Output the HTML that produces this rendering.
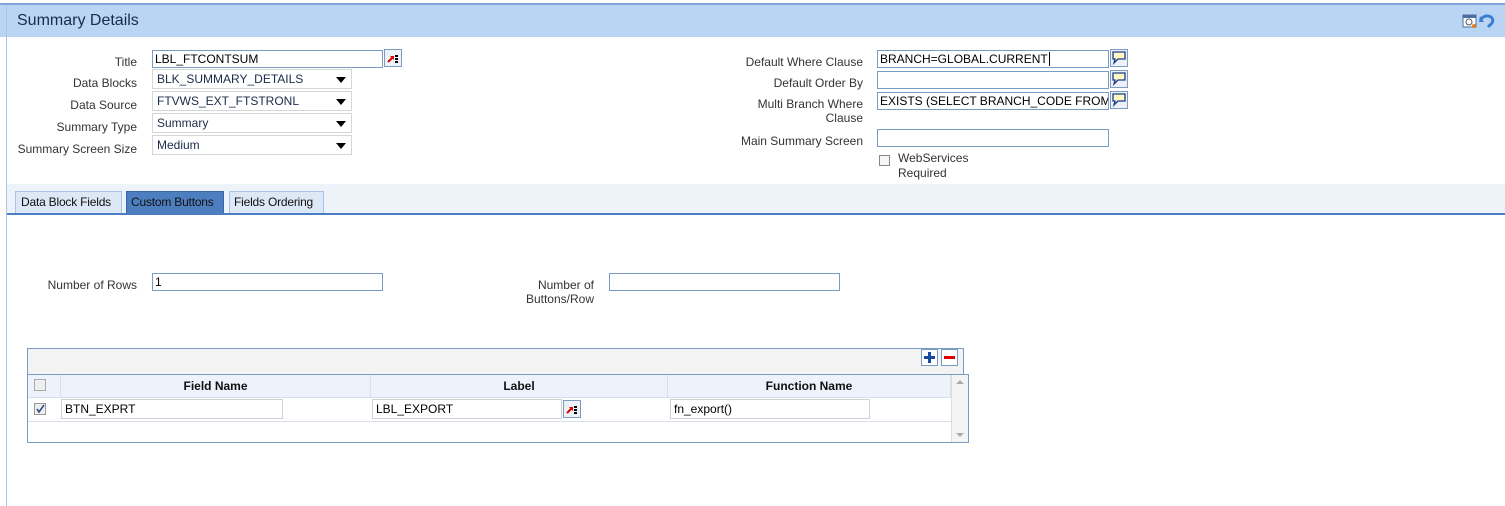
<!DOCTYPE html>
<html><head><meta charset="utf-8">
<style>
*{margin:0;padding:0;box-sizing:border-box}
body{width:1505px;height:506px;background:#fff;position:relative;overflow:hidden;font-family:"Liberation Sans",Arial,sans-serif;font-size:12px;color:#333}
.a{position:absolute}
.lbl{position:absolute;text-align:right;color:#333;font-size:12px;line-height:14px}
.inp{position:absolute;height:18px;border:1px solid #7a9cc4;background:#fff;font-size:12px;line-height:16px;padding-left:2px;color:#000;white-space:nowrap;overflow:hidden}
.sel{position:absolute;height:20px;border:1px solid #d6d6d6;background:#fff;font-size:12px;line-height:18px;padding-left:4px;color:#1a2b4a}
.sel:after{content:"";position:absolute;right:5px;top:7px;border-left:5px solid transparent;border-right:5px solid transparent;border-top:6px solid #000}
.lk{position:absolute;width:18px;height:18px;border:1px solid #7a9cc4;background:#eef2f8}
.tab{position:absolute;top:191px;height:22px;border:1px solid #a9c4e6;border-bottom:none;background:#dde8f6;font-size:12px;line-height:20px;padding:0 0 0 5px;color:#111;white-space:nowrap;overflow:hidden;letter-spacing:-0.2px}
.th{position:absolute;top:375px;height:22px;background:#eef2fa;border-right:1px solid #d6dfec;font-weight:bold;font-size:12px;line-height:22px;text-align:center;color:#111}
.ci{position:absolute;height:20px;border:1px solid #d0d0d0;background:#fff;font-size:12px;line-height:18px;padding-left:3px;color:#000}
</style></head><body>
<div class="a" style="left:0;top:3px;width:1505px;height:2px;background:#7ea6d8"></div>
<div class="a" style="left:0;top:5px;width:1505px;height:32px;background:#b9d5f3"></div>
<div class="a" style="left:6px;top:5px;width:1px;height:501px;background:#a9c4e6"></div>
<div class="a" style="left:17px;top:12px;font-size:16px;color:#1a2b4a">Summary Details</div>
<svg class="a" style="left:1462px;top:13px" width="34" height="16" viewBox="0 0 34 16">
<rect x="1" y="2" width="13" height="12" fill="#fff" stroke="#4a6fa0"/><rect x="1" y="2" width="13" height="3" fill="#4a6fa0"/><circle cx="7" cy="9" r="3" fill="none" stroke="#555"/><circle cx="12" cy="13" r="2" fill="#e08020"/>
<path d="M19 6 Q24 1 29 4 Q33 8 28 12 L26 14" fill="none" stroke="#3a7fd0" stroke-width="3"/><path d="M18 3 L22 9 L17 9Z" fill="#3a7fd0"/>
</svg>

<div class="lbl" style="left:20px;width:117px;top:55px">Title</div>
<div class="inp" style="left:152px;top:50px;width:231px">LBL_FTCONTSUM</div>
<div class="lk" style="left:384px;top:49px"><svg width="16" height="16"><path d="M3 12 L8 7" stroke="#d00" stroke-width="2"/><path d="M5 6 L9 6 L9 10Z" fill="#d00"/><rect x="10" y="5" width="3" height="2" fill="#000"/><rect x="10" y="8" width="3" height="2" fill="#000"/><rect x="10" y="11" width="3" height="2" fill="#000"/></svg></div>
<div class="lbl" style="left:20px;width:117px;top:76px">Data Blocks</div>
<div class="sel" style="left:152px;top:69px;width:200px">BLK_SUMMARY_DETAILS</div>
<div class="lbl" style="left:20px;width:117px;top:98px">Data Source</div>
<div class="sel" style="left:152px;top:91px;width:200px">FTVWS_EXT_FTSTRONL</div>
<div class="lbl" style="left:20px;width:117px;top:120px">Summary Type</div>
<div class="sel" style="left:152px;top:113px;width:200px">Summary</div>
<div class="lbl" style="left:0;width:137px;top:142px">Summary Screen Size</div>
<div class="sel" style="left:152px;top:135px;width:200px">Medium</div>

<div class="lbl" style="left:700px;width:163px;top:55px">Default Where Clause</div>
<div class="inp" style="left:877px;top:50px;width:232px">BRANCH=GLOBAL.CURRENT<span style="border-left:1px solid #000;margin-left:1px"></span></div>
<div class="lbl" style="left:700px;width:163px;top:76px">Default Order By</div>
<div class="inp" style="left:877px;top:71px;width:232px"></div>
<div class="lbl" style="left:700px;width:163px;top:97px">Multi Branch Where<br>Clause</div>
<div class="inp" style="left:877px;top:92px;width:232px">EXISTS (SELECT BRANCH_CODE FROM</div>
<div class="lk" style="left:1110px;top:49px"></div>
<div class="lk" style="left:1110px;top:70px"></div>
<div class="lk" style="left:1110px;top:91px"></div>
<svg class="a" style="left:1111px;top:50px" width="16" height="60"><g fill="#fff8c0" stroke="#1a3a8a" stroke-width="1.3"><path d="M2 2 H14 V9 H7 L3 13 L4 9 H2Z"/><path d="M2 23 H14 V30 H7 L3 34 L4 30 H2Z"/><path d="M2 44 H14 V51 H7 L3 55 L4 51 H2Z"/></g></svg>
<div class="lbl" style="left:700px;width:163px;top:134px">Main Summary Screen</div>
<div class="inp" style="left:877px;top:129px;width:232px"></div>
<div class="a" style="left:879px;top:155px;width:11px;height:11px;border:1px solid #888;background:#f6f6f6"></div>
<div class="a" style="left:898px;top:151px;line-height:15px;color:#333">WebServices<br>Required</div>

<div class="a" style="left:7px;top:184px;width:1498px;height:30px;background:#eef3fa"></div>
<div class="a" style="left:7px;top:213px;width:1498px;height:2px;background:#4a7fc0"></div>
<div class="tab" style="left:15px;width:107px">Data Block Fields</div>
<div class="tab" style="left:126px;width:98px;background:#4d7fc0;border-color:#3a66a8;color:#111;padding-left:4px">Custom Buttons</div>
<div class="tab" style="left:229px;width:95px;padding-left:4px">Fields Ordering</div>

<div class="lbl" style="left:20px;width:117px;top:278px">Number of Rows</div>
<div class="inp" style="left:152px;top:273px;width:231px">1</div>
<div class="lbl" style="left:480px;width:114px;top:278px">Number of<br>Buttons/Row</div>
<div class="inp" style="left:609px;top:273px;width:231px"></div>

<div class="a" style="left:27px;top:348px;width:937px;height:26px;background:#f3f3f3;border:1px solid #7a9cc4;border-bottom:none"></div>
<div class="a" style="left:921px;top:349px;width:17px;height:17px;border:1px solid #7a9cc4;background:#fff"><div class="a" style="left:2px;top:6px;width:11px;height:3px;background:#1a4aa0"></div><div class="a" style="left:6px;top:2px;width:3px;height:11px;background:#1a4aa0"></div></div>
<div class="a" style="left:941px;top:349px;width:17px;height:17px;border:1px solid #7a9cc4;background:#fff"><div class="a" style="left:2px;top:6px;width:11px;height:3px;background:#d00"></div></div>
<div class="a" style="left:27px;top:374px;width:942px;height:69px;border:1px solid #7a9cc4;background:#fff"></div>
<div class="th" style="left:28px;width:33px"></div>
<div class="th" style="left:61px;width:310px">Field Name</div>
<div class="th" style="left:371px;width:297px">Label</div>
<div class="th" style="left:668px;width:283px">Function Name</div>
<div class="a" style="left:951px;top:375px;width:17px;height:67px;background:#f4f4f4;border-left:1px solid #ddd"></div>
<div class="a" style="left:956px;top:380px;border-left:4px solid transparent;border-right:4px solid transparent;border-bottom:4px solid #aaa"></div>
<div class="a" style="left:956px;top:433px;border-left:4px solid transparent;border-right:4px solid transparent;border-top:4px solid #aaa"></div>
<div class="a" style="left:34px;top:379px;width:12px;height:12px;border:1px solid #aaa;background:#eee"></div>
<div class="a" style="left:28px;top:397px;width:923px;height:1px;background:#d6dfec"></div>
<div class="a" style="left:28px;top:421px;width:923px;height:1px;background:#d6dfec"></div>
<div class="a" style="left:34px;top:403px;width:12px;height:12px;border:1px solid #999;background:#eee"><svg width="10" height="10" style="position:absolute;left:0;top:0"><path d="M2 5 L4 8 L9 1" fill="none" stroke="#2a4a8a" stroke-width="1.6"/></svg></div>
<div class="ci" style="left:61px;top:399px;width:222px">BTN_EXPRT</div>
<div class="ci" style="left:372px;top:399px;width:190px">LBL_EXPORT</div>
<div class="lk" style="left:563px;top:400px"><svg width="16" height="16"><path d="M3 12 L8 7" stroke="#d00" stroke-width="2"/><path d="M5 6 L9 6 L9 10Z" fill="#d00"/><rect x="10" y="5" width="3" height="2" fill="#000"/><rect x="10" y="8" width="3" height="2" fill="#000"/><rect x="10" y="11" width="3" height="2" fill="#000"/></svg></div>
<div class="ci" style="left:670px;top:399px;width:200px">fn_export()</div>
</body></html>
